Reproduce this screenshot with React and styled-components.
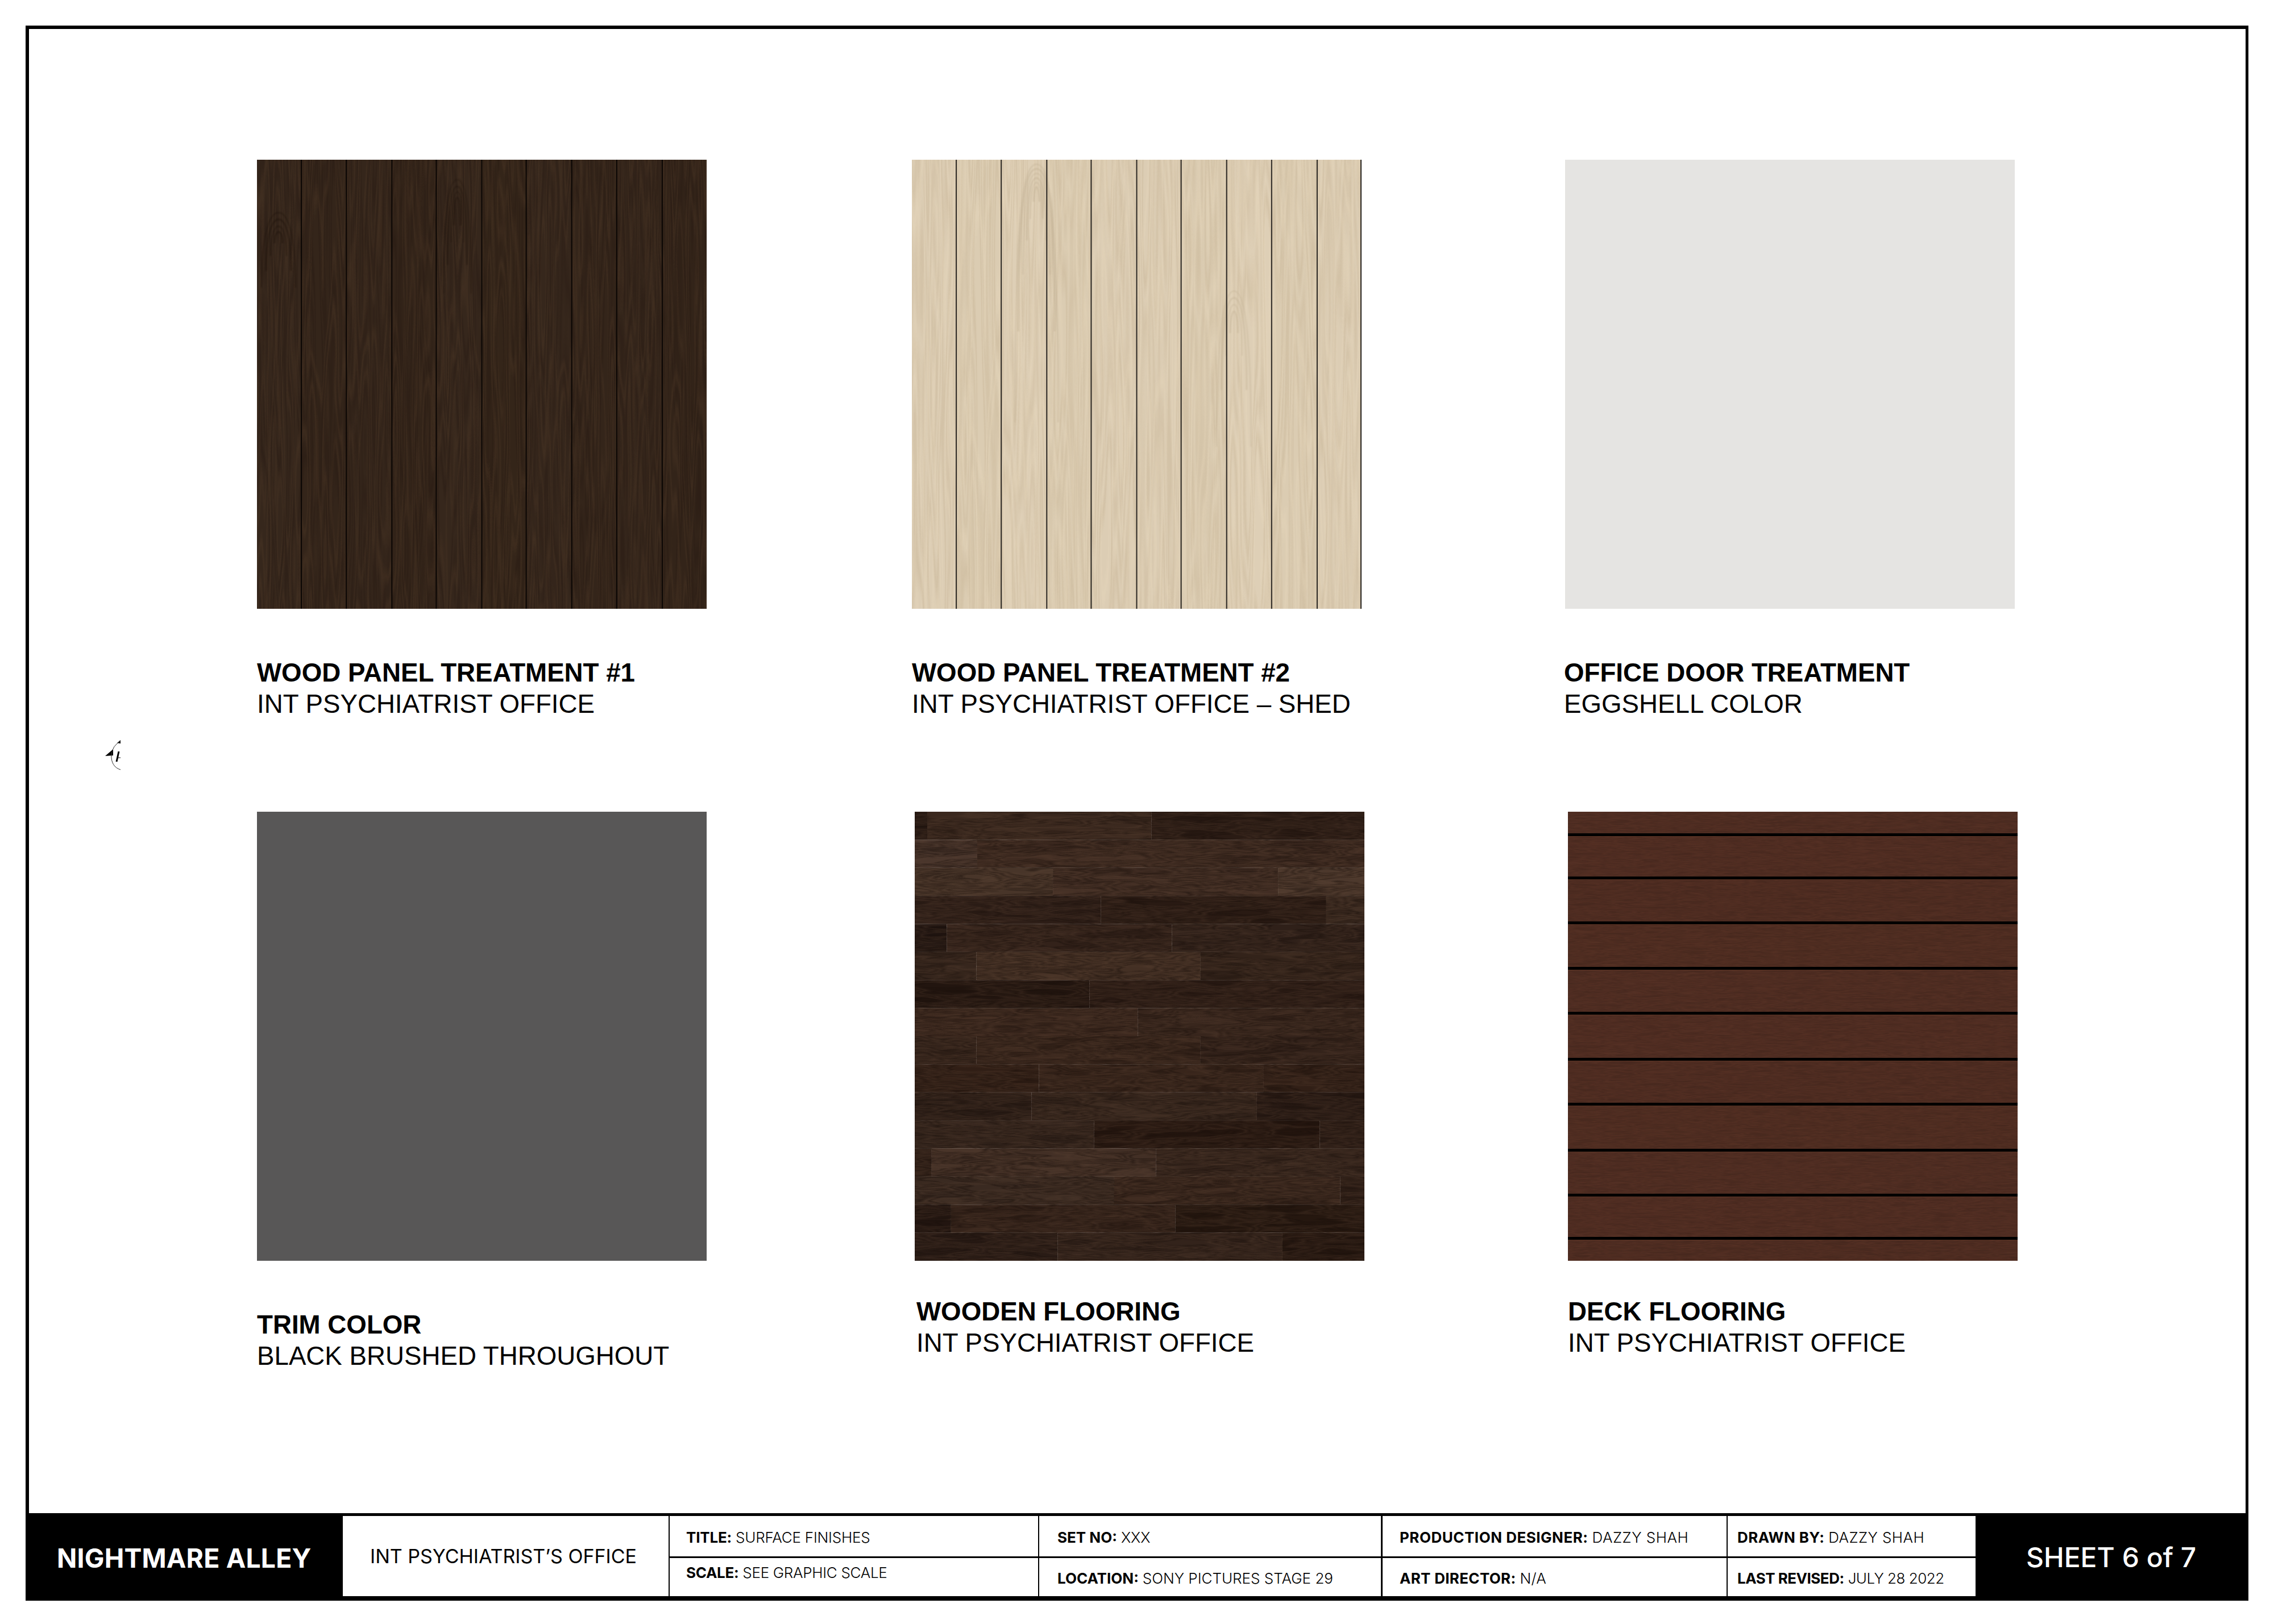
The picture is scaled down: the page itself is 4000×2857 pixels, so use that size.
import React from "react";
import styled, { createGlobalStyle } from "styled-components";

const GlobalStyle = createGlobalStyle`
  html, body {
    margin: 0;
    padding: 0;
    background: #fff;
  }
`;

const Sheet = styled.div`
  position: relative;
  box-sizing: border-box;
  width: 3910px;
  height: 2771px;
  margin: 45px 0 0 45px;
  border: solid #000;
  border-width: 6px 5px 1px 6px;
  display: flex;
  flex-direction: column;
  background: #fff;
`;

const Canvas = styled.main`
  flex: 1;
  padding: 230px 0 0 401px;
`;

const SwatchRow = styled.section`
  display: grid;
  grid-template-columns: ${(p) => p.$cols};
  height: ${(p) => p.$height}px;
  align-items: start;
`;

const Finish = styled.article`
  display: flex;
  flex-direction: column;
`;

const Flat = styled.div`
  width: 791px;
  height: 790px;
  background: ${(p) => p.$color};
`;

const WoodSvg = styled.svg`
  display: block;
  width: 791px;
  height: 790px;
`;

const Caption = styled.div`
  margin: ${(p) => p.$top}px 0 0 ${(p) => p.$shift || 0}px;
  font-family: "Liberation Sans", Arial, sans-serif;
  font-size: 45.7px;
  line-height: 55px;
  color: #000;
  white-space: nowrap;
`;

const CaptionTitle = styled.div`
  font-weight: 700;
`;

const SectionMark = styled.svg`
  position: absolute;
  left: 130px;
  top: 1248px;
  width: 35px;
  height: 60px;
`;

const Footer = styled.footer`
  box-sizing: border-box;
  height: 153px;
  padding: 5px 0 7px;
  background: #000;
  display: grid;
  grid-template-columns: 552px 575px 650px 604px 607px 436px 1fr;
  font-family: "Inter", "Liberation Sans", sans-serif;
`;

const Project = styled.div`
  display: flex;
  align-items: center;
  padding: 7px 0 0 49px;
  color: #fff;
  font-size: 46.3px;
  font-weight: 700;
  letter-spacing: 0.2px;
  white-space: nowrap;
`;

const Room = styled.div`
  display: flex;
  align-items: center;
  padding-left: 48px;
  background: #fff;
  border-right: 2px solid #000;
  font-size: 34px;
  font-weight: 400;
  white-space: nowrap;
`;

const MetaColumn = styled.div`
  display: grid;
  grid-template-rows: 71px 1fr;
  background: #fff;
  border-right: ${(p) => p.$rule}px solid #000;
`;

const MetaCell = styled.div`
  display: flex;
  align-items: ${(p) => (p.$raised ? "flex-start" : "center")};
  box-sizing: border-box;
  padding: ${(p) => (p.$raised ? "10px" : "3px")} 0 0 ${(p) => p.$inset}px;
  font-size: 26px;
  font-weight: 300;
  letter-spacing: ${(p) => p.$track || 0}px;
  white-space: nowrap;
  & + & {
    border-top: 3px solid #000;
  }
`;

const MetaLabel = styled.b`
  font-weight: 700;
  margin-right: 7px;
`;

const SheetNumber = styled.div`
  display: flex;
  align-items: center;
  justify-content: center;
  padding: 4px 0 0 2px;
  color: #fff;
  font-size: 48px;
  font-weight: 500;
  white-space: nowrap;
`;

const GrainArcs = styled.g`
  fill: none;
  filter: blur(1.2px);
`;

// turbulence pushed through a table so the noise reads as contour lines of grain
const GrainFilter = ({ id, freq, seed, rgb, gain, table, octaves }) => (
  <filter id={id} x="0" y="0" width="1" height="1" colorInterpolationFilters="sRGB">
    <feTurbulence type="fractalNoise" baseFrequency={freq} numOctaves={octaves} seed={seed} />
    <feColorMatrix values={`0 0 0 0 ${rgb[0]} 0 0 0 0 ${rgb[1]} 0 0 0 0 ${rgb[2]} ${gain} 0 0 0 ${0.5 - gain / 2}`} />
    <feComponentTransfer>
      <feFuncA type="table" tableValues={table} />
    </feComponentTransfer>
  </filter>
);

const Boards = ({ name, boards, size, freq, octaves = 1, dark, light, seams = [], seamFill = "#000", lip, children }) => (
  <WoodSvg viewBox={`0 0 ${size} ${size}`} preserveAspectRatio="none">
    <defs>
      {boards.map((b, i) => (
        <React.Fragment key={i}>
          <GrainFilter id={`${name}d${i}`} freq={freq} octaves={octaves} seed={i * 3 + 2} rgb={dark.rgb} gain={dark.gain} table={dark.table} />
          <GrainFilter id={`${name}l${i}`} freq={freq} octaves={octaves} seed={i * 5 + 40} rgb={light.rgb} gain={light.gain} table={light.table} />
        </React.Fragment>
      ))}
    </defs>
    {boards.map((b, i) => (
      <g key={i}>
        <rect x={b.x} y={b.y} width={b.w} height={b.h} fill={b.color} />
        <rect x={b.x} y={b.y} width={b.w} height={b.h} filter={`url(#${name}d${i})`} />
        <rect x={b.x} y={b.y} width={b.w} height={b.h} filter={`url(#${name}l${i})`} />
      </g>
    ))}
    {children}
    {seams.map((s, i) => (
      <rect key={i} x={s.x} y={s.y} width={s.w} height={s.h} fill={seamFill} />
    ))}
    {lip && seams.map((s, i) => <rect key={i} x={s.x} y={s.y + s.h} width={s.w} height="1" fill={lip} opacity="0.5" />)}
  </WoodSvg>
);

// nested cathedral arcs: closed at the top, legs running on down the board
const Cathedral = ({ cx, cy, arcs, stroke, opacity }) => (
  <GrainArcs stroke={stroke} opacity={opacity}>
    {arcs.map(([rx, rise, leg], i) => (
      <path
        key={i}
        d={`M${cx - rx} ${cy + leg} C${cx - rx} ${cy - rise * 0.2} ${cx - rx * 0.5} ${cy - rise} ${cx} ${cy - rise} C${cx + rx * 0.5} ${cy - rise} ${cx + rx} ${cy - rise * 0.2} ${cx + rx} ${cy + leg}`}
        strokeWidth={i % 2 ? 2 : 3}
      />
    ))}
  </GrainArcs>
);

// rows of the wooden floor as [x end, colour] measured on a 1510 unit square
const floorRows = [
  [[42, "#241711"], [795, "#3a281e"], [1510, "#2a1b14"]],
  [[210, "#46332a"], [1510, "#3f2b21"]],
  [[464, "#483529"], [1220, "#412d23"], [1510, "#4c382c"]],
  [[625, "#2f1f18"], [1382, "#291a13"], [1510, "#3b2a20"]],
  [[108, "#1e130f"], [864, "#33221a"], [1510, "#2f2019"]],
  [[207, "#35251c"], [960, "#443024"], [1510, "#33231a"]],
  [[587, "#22150f"], [1510, "#2c1c15"]],
  [[749, "#3c281e"], [1510, "#37251c"]],
  [[207, "#35241b"], [960, "#39261c"], [1510, "#33221a"]],
  [[417, "#301e15"], [1172, "#38251b"], [1510, "#311f16"]],
  [[392, "#2c1e17"], [1149, "#36261d"], [1510, "#281a14"]],
  [[602, "#33241c"], [1360, "#25160f"], [1510, "#2b1c15"]],
  [[57, "#2e1e16"], [810, "#422f25"], [1510, "#37261d"]],
  [[670, "#3a2a21"], [1429, "#3a271d"], [1510, "#2f1f17"]],
  [[122, "#221510"], [875, "#35231a"], [1510, "#25170f"]],
  [[480, "#291b15"], [1235, "#33231b"], [1510, "#24160f"]],
];

const floorBoards = floorRows.flatMap((row, r) => {
  const y = (r * 1510) / 16;
  let x = 0;
  return row.map(([end, color]) => {
    const board = { x, y, w: end - x, h: 1510 / 16, color };
    x = end;
    return board;
  });
});

const deckSeamsAt = [40, 116, 195, 275, 354, 435, 514, 595, 674, 750];
const deckEdges = [0, ...deckSeamsAt, 790];
const deckBoards = deckEdges.slice(0, -1).map((y, i) => ({
  x: 0,
  y,
  w: 790,
  h: deckEdges[i + 1] - y,
  color: ["#4e2d22", "#4f2d22", "#4d2c21", "#4e2d21"][i % 4],
}));
const deckSeams = deckSeamsAt.map((y) => ({ x: 0, y: y - 2, w: 790, h: 5 }));

const panelSeamsAt = [78, 157, 237, 315, 395, 473, 553, 632, 712];
const panelEdges = [0, ...panelSeamsAt, 790];
const makePanels = (colors) =>
  panelEdges.slice(0, -1).map((x, i) => ({
    x,
    y: 0,
    w: panelEdges[i + 1] - x,
    h: 790,
    color: colors[i % colors.length],
  }));
const panelSeams = (w) => panelSeamsAt.map((x) => ({ x: x - w / 2, y: 0, w, h: 790 }));

const DarkPanel = () => (
  <Boards
    name="dp"
    size={790}
    freq="0.05 0.0025"
    octaves={2}
    boards={makePanels(["#36271c", "#34251a", "#35261b", "#332419", "#36271c", "#342519"])}
    seams={panelSeams(2)}
    seamFill="#0a0604"
    dark={{ rgb: [0.12, 0.07, 0.05], gain: 2.5, table: "0 .3 0 .25 0 .3 0" }}
    light={{ rgb: [0.35, 0.25, 0.17], gain: 2.5, table: "0 0 .26 0 0 .28 0 0 .22 0" }}
  >
    <Cathedral cx={38} cy={135} stroke="#1a0f08" opacity={0.4} arcs={[[7, 8, 12], [14, 18, 34], [22, 30, 60], [30, 42, 90]]} />
    <Cathedral cx={352} cy={75} stroke="#1a0f08" opacity={0.3} arcs={[[6, 8, 40], [11, 18, 70], [17, 28, 110], [24, 40, 160]]} />
  </Boards>
);

const PalePanel = () => (
  <Boards
    name="pp"
    size={790}
    freq="0.045 0.0018"
    octaves={2}
    boards={makePanels(["#dccdb4", "#dbccb2", "#decfb6", "#dbccb2", "#dccdb4"])}
    seams={[...panelSeams(2), { x: 788, y: 0, w: 2, h: 790 }]}
    seamFill="#2a2622"
    dark={{ rgb: [0.74, 0.66, 0.53], gain: 2.5, table: "0 .3 0 .25 0 .3 0" }}
    light={{ rgb: [0.92, 0.86, 0.75], gain: 2.5, table: "0 0 .3 0 0 .3 0 0 .25 0" }}
  >
    <Cathedral cx={219} cy={62} stroke="#bfae92" opacity={0.45} arcs={[[5, 14, 12], [11, 22, 42], [17, 30, 80], [24, 38, 140], [32, 46, 240], [38, 54, 400]]} />
    <Cathedral cx={566} cy={285} stroke="#bfae92" opacity={0.4} arcs={[[7, 18, 20], [14, 30, 60], [22, 42, 120], [30, 54, 220]]} />
  </Boards>
);

const WoodFloor = () => (
  <Boards
    name="wf"
    size={1510}
    freq="0.0035 0.028"
    octaves={3}
    boards={floorBoards}
    dark={{ rgb: [0.09, 0.05, 0.03], gain: 2.6, table: "0 .45 .05 .45 .05 .45 .05 .45 0" }}
    light={{ rgb: [0.4, 0.29, 0.22], gain: 2.6, table: "0 .05 .24 .05 .22 .05 .24 .05 0" }}
  />
);

const DeckFloor = () => (
  <Boards
    name="df"
    size={790}
    freq="0.016 0.18"
    octaves={2}
    boards={deckBoards}
    seams={deckSeams}
    lip="#6b3d29"
    dark={{ rgb: [0.23, 0.12, 0.09], gain: 2, table: "0 .35 .1 .35 .1 .35 0" }}
    light={{ rgb: [0.4, 0.22, 0.16], gain: 2, table: "0 .05 .3 .05 .3 .05 0" }}
  />
);

const Meta = ({ label, value, inset, raised, track }) => (
  <MetaCell $inset={inset} $raised={raised} $track={track}>
    <MetaLabel>{label}</MetaLabel>
    {value}
  </MetaCell>
);

export default function App() {
  return (
    <>
      <GlobalStyle />
      <Sheet>
        <SectionMark viewBox="0 0 35 60">
          <path d="M4 31 L18 19 L18 30 Z" fill="#000" />
          <path d="M25 8 L31 3 L31 9 Z" fill="#000" />
          <path d="M31 5 A 29 29 0 0 0 15 29 C 14 42 20 52 31 55" fill="none" stroke="#333" strokeWidth="1" />
          <path d="M28 23 L24 41" fill="none" stroke="#000" strokeWidth="3" />
          <path d="M25 34 L31 34" fill="none" stroke="#000" strokeWidth="1" />
        </SectionMark>
        <Canvas>
          <SwatchRow $cols="1152px 1149px 1fr" $height={1147}>
            <Finish>
              <DarkPanel />
              <Caption $top={85}>
                <CaptionTitle>WOOD PANEL TREATMENT #1</CaptionTitle>
                INT PSYCHIATRIST OFFICE
              </Caption>
            </Finish>
            <Finish>
              <PalePanel />
              <Caption $top={85}>
                <CaptionTitle>WOOD PANEL TREATMENT #2</CaptionTitle>
                INT PSYCHIATRIST OFFICE – SHED
              </Caption>
            </Finish>
            <Finish>
              <Flat $color="#e5e4e2" />
              <Caption $top={85} $shift={-2}>
                <CaptionTitle>OFFICE DOOR TREATMENT</CaptionTitle>
                EGGSHELL COLOR
              </Caption>
            </Finish>
          </SwatchRow>
          <SwatchRow $cols="1157px 1149px 1fr" $height={1100}>
            <Finish>
              <Flat $color="#585757" />
              <Caption $top={85}>
                <CaptionTitle>TRIM COLOR</CaptionTitle>
                BLACK BRUSHED THROUGHOUT
              </Caption>
            </Finish>
            <Finish>
              <WoodFloor />
              <Caption $top={62} $shift={3}>
                <CaptionTitle>WOODEN FLOORING</CaptionTitle>
                INT PSYCHIATRIST OFFICE
              </Caption>
            </Finish>
            <Finish>
              <DeckFloor />
              <Caption $top={62}>
                <CaptionTitle>DECK FLOORING</CaptionTitle>
                INT PSYCHIATRIST OFFICE
              </Caption>
            </Finish>
          </SwatchRow>
        </Canvas>
        <Footer>
          <Project>NIGHTMARE ALLEY</Project>
          <Room>INT PSYCHIATRIST’S OFFICE</Room>
          <MetaColumn $rule={2}>
            <Meta label="TITLE:" value="SURFACE FINISHES" inset={29} track={-0.2} />
            <Meta label="SCALE:" value="SEE GRAPHIC SCALE" inset={29} track={-0.3} raised />
          </MetaColumn>
          <MetaColumn $rule={3}>
            <Meta label="SET NO:" value="XXX" inset={32} />
            <Meta label="LOCATION:" value="SONY PICTURES STAGE 29" inset={32} />
          </MetaColumn>
          <MetaColumn $rule={2}>
            <Meta label="PRODUCTION DESIGNER:" value="DAZZY SHAH" inset={30} track={0.5} />
            <Meta label="ART DIRECTOR:" value="N/A" inset={30} track={0.3} />
          </MetaColumn>
          <MetaColumn $rule={0}>
            <Meta label="DRAWN BY:" value="DAZZY SHAH" inset={17} track={0.4} />
            <Meta label="LAST REVISED:" value="JULY 28 2022" inset={17} track={-0.5} />
          </MetaColumn>
          <SheetNumber>SHEET 6 of 7</SheetNumber>
        </Footer>
      </Sheet>
    </>
  );
}
